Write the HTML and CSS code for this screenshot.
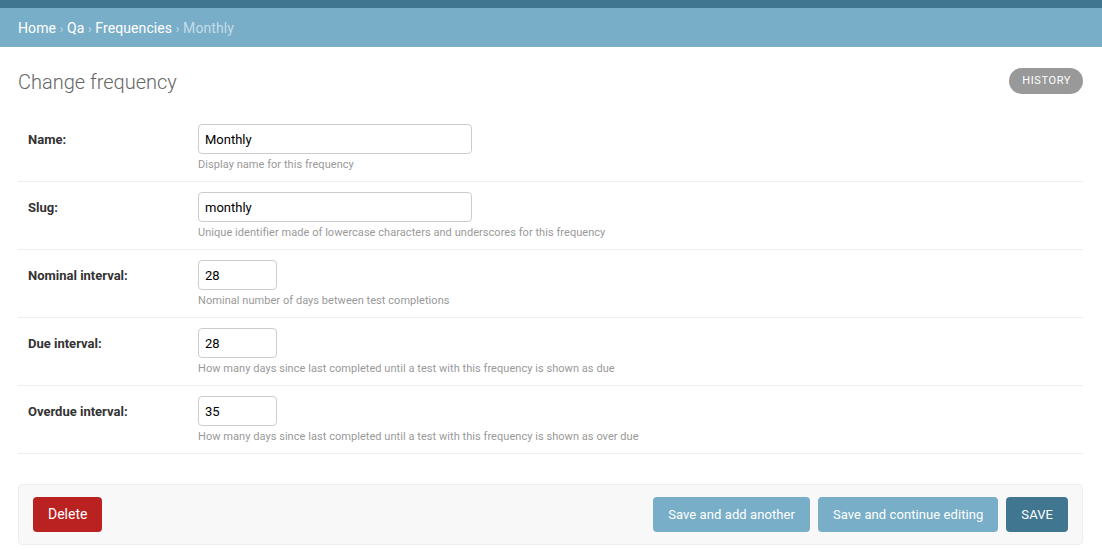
FILE: index.html
```html
<!DOCTYPE html>
<html lang="en">
<head>
  <meta charset="UTF-8">
  <title>Change frequency | Django site admin</title>
  <link rel="stylesheet" href="styles.css">
</head>
<body>
  <div class="topbar"></div>
  <div class="breadcrumbs">
    <a href="#">Home</a> <span class="sep">›</span>
    <a href="#">Qa</a> <span class="sep">›</span>
    <a href="#">Frequencies</a> <span class="sep">›</span>
    <span class="current">Monthly</span>
  </div>

  <div class="content">
    <div class="title-row">
      <h1>Change frequency</h1>
      <a href="#" class="historylink">History</a>
    </div>

    <form>
      <div class="form-row">
        <label for="id_name">Name:</label>
        <div class="field">
          <input type="text" id="id_name" class="wide" value="Monthly">
          <div class="help">Display name for this frequency</div>
        </div>
      </div>
      <div class="form-row">
        <label for="id_slug">Slug:</label>
        <div class="field">
          <input type="text" id="id_slug" class="wide" value="monthly">
          <div class="help">Unique identifier made of lowercase characters and underscores for this frequency</div>
        </div>
      </div>
      <div class="form-row">
        <label for="id_nominal">Nominal interval:</label>
        <div class="field">
          <input type="text" id="id_nominal" class="short" value="28">
          <div class="help">Nominal number of days between test completions</div>
        </div>
      </div>
      <div class="form-row">
        <label for="id_due">Due interval:</label>
        <div class="field">
          <input type="text" id="id_due" class="short" value="28">
          <div class="help">How many days since last completed until a test with this frequency is shown as due</div>
        </div>
      </div>
      <div class="form-row">
        <label for="id_overdue">Overdue interval:</label>
        <div class="field">
          <input type="text" id="id_overdue" class="short" value="35">
          <div class="help">How many days since last completed until a test with this frequency is shown as over due</div>
        </div>
      </div>

      <div class="submit-row">
        <a href="#" class="deletelink">Delete</a>
        <div class="actions">
          <button type="button" class="btn">Save and add another</button>
          <button type="button" class="btn">Save and continue editing</button>
          <button type="button" class="btn default">SAVE</button>
        </div>
      </div>
    </form>
  </div>
</body>
</html>
```

FILE: styles.css
```css
body { margin: 0; font-family: Roboto, "Liberation Sans", sans-serif; font-size: 14px; color: #333; background: #fff; }
a { text-decoration: none; }

.topbar { height: 8px; background: #417690; }
.breadcrumbs { background: #79aec8; padding: 11px 18px 9px 18px; line-height: 18px; color: #c4dce8; font-size: 14px; letter-spacing: 0.1px; }
.breadcrumbs a { color: #fff; }
.breadcrumbs .sep { font-size: 12px; color: #c4dce8; }
.breadcrumbs .current { color: #c4dce8; }

.content { padding: 20px 19px 0 18px; }
.title-row { display: flex; justify-content: space-between; align-items: flex-start; margin-bottom: 17px; }
h1 { margin: 0; font-size: 20px; font-weight: 300; line-height: 30px; color: #666; }
.historylink { display: block; margin-top: 1px; height: 26px; line-height: 26px; padding: 0 12px 0 13px; border-radius: 13px; background: #999; color: #fff; font-size: 11px; text-transform: uppercase; letter-spacing: 0.6px; }

.form-row { display: flex; padding: 10px 10px 9px 10px; border-bottom: 1px solid #eee; }
.form-row label { width: 160px; padding: 1px 10px 0 0; font-size: 13px; font-weight: bold; color: #333; line-height: 30px; }
.field input { box-sizing: border-box; height: 30px; padding: 5px 6px; border: 1px solid #ccc; border-radius: 4px; font-family: inherit; font-size: 13px; color: #000; }
.field input.wide { width: 274px; }
.field input.short { width: 79px; }
.help { margin-top: 4px; font-size: 11px; line-height: 14px; color: #999; letter-spacing: 0.05px; }

.submit-row { display: flex; justify-content: space-between; align-items: center; margin-top: 30px; padding: 12px 14px; background: #f8f8f8; border: 1px solid #eee; border-radius: 4px; }
.deletelink { display: block; height: 35px; line-height: 35px; padding: 0 15px; background: #ba2121; color: #fff; border-radius: 4px; font-size: 14px; }
.actions { display: flex; gap: 8px; }
.btn { height: 35px; padding: 0 15px; border: none; border-radius: 4px; background: #79aec8; color: #fff; font-family: inherit; font-size: 13px; letter-spacing: 0.08px; cursor: pointer; }
.btn.default { background: #417690; }
```
